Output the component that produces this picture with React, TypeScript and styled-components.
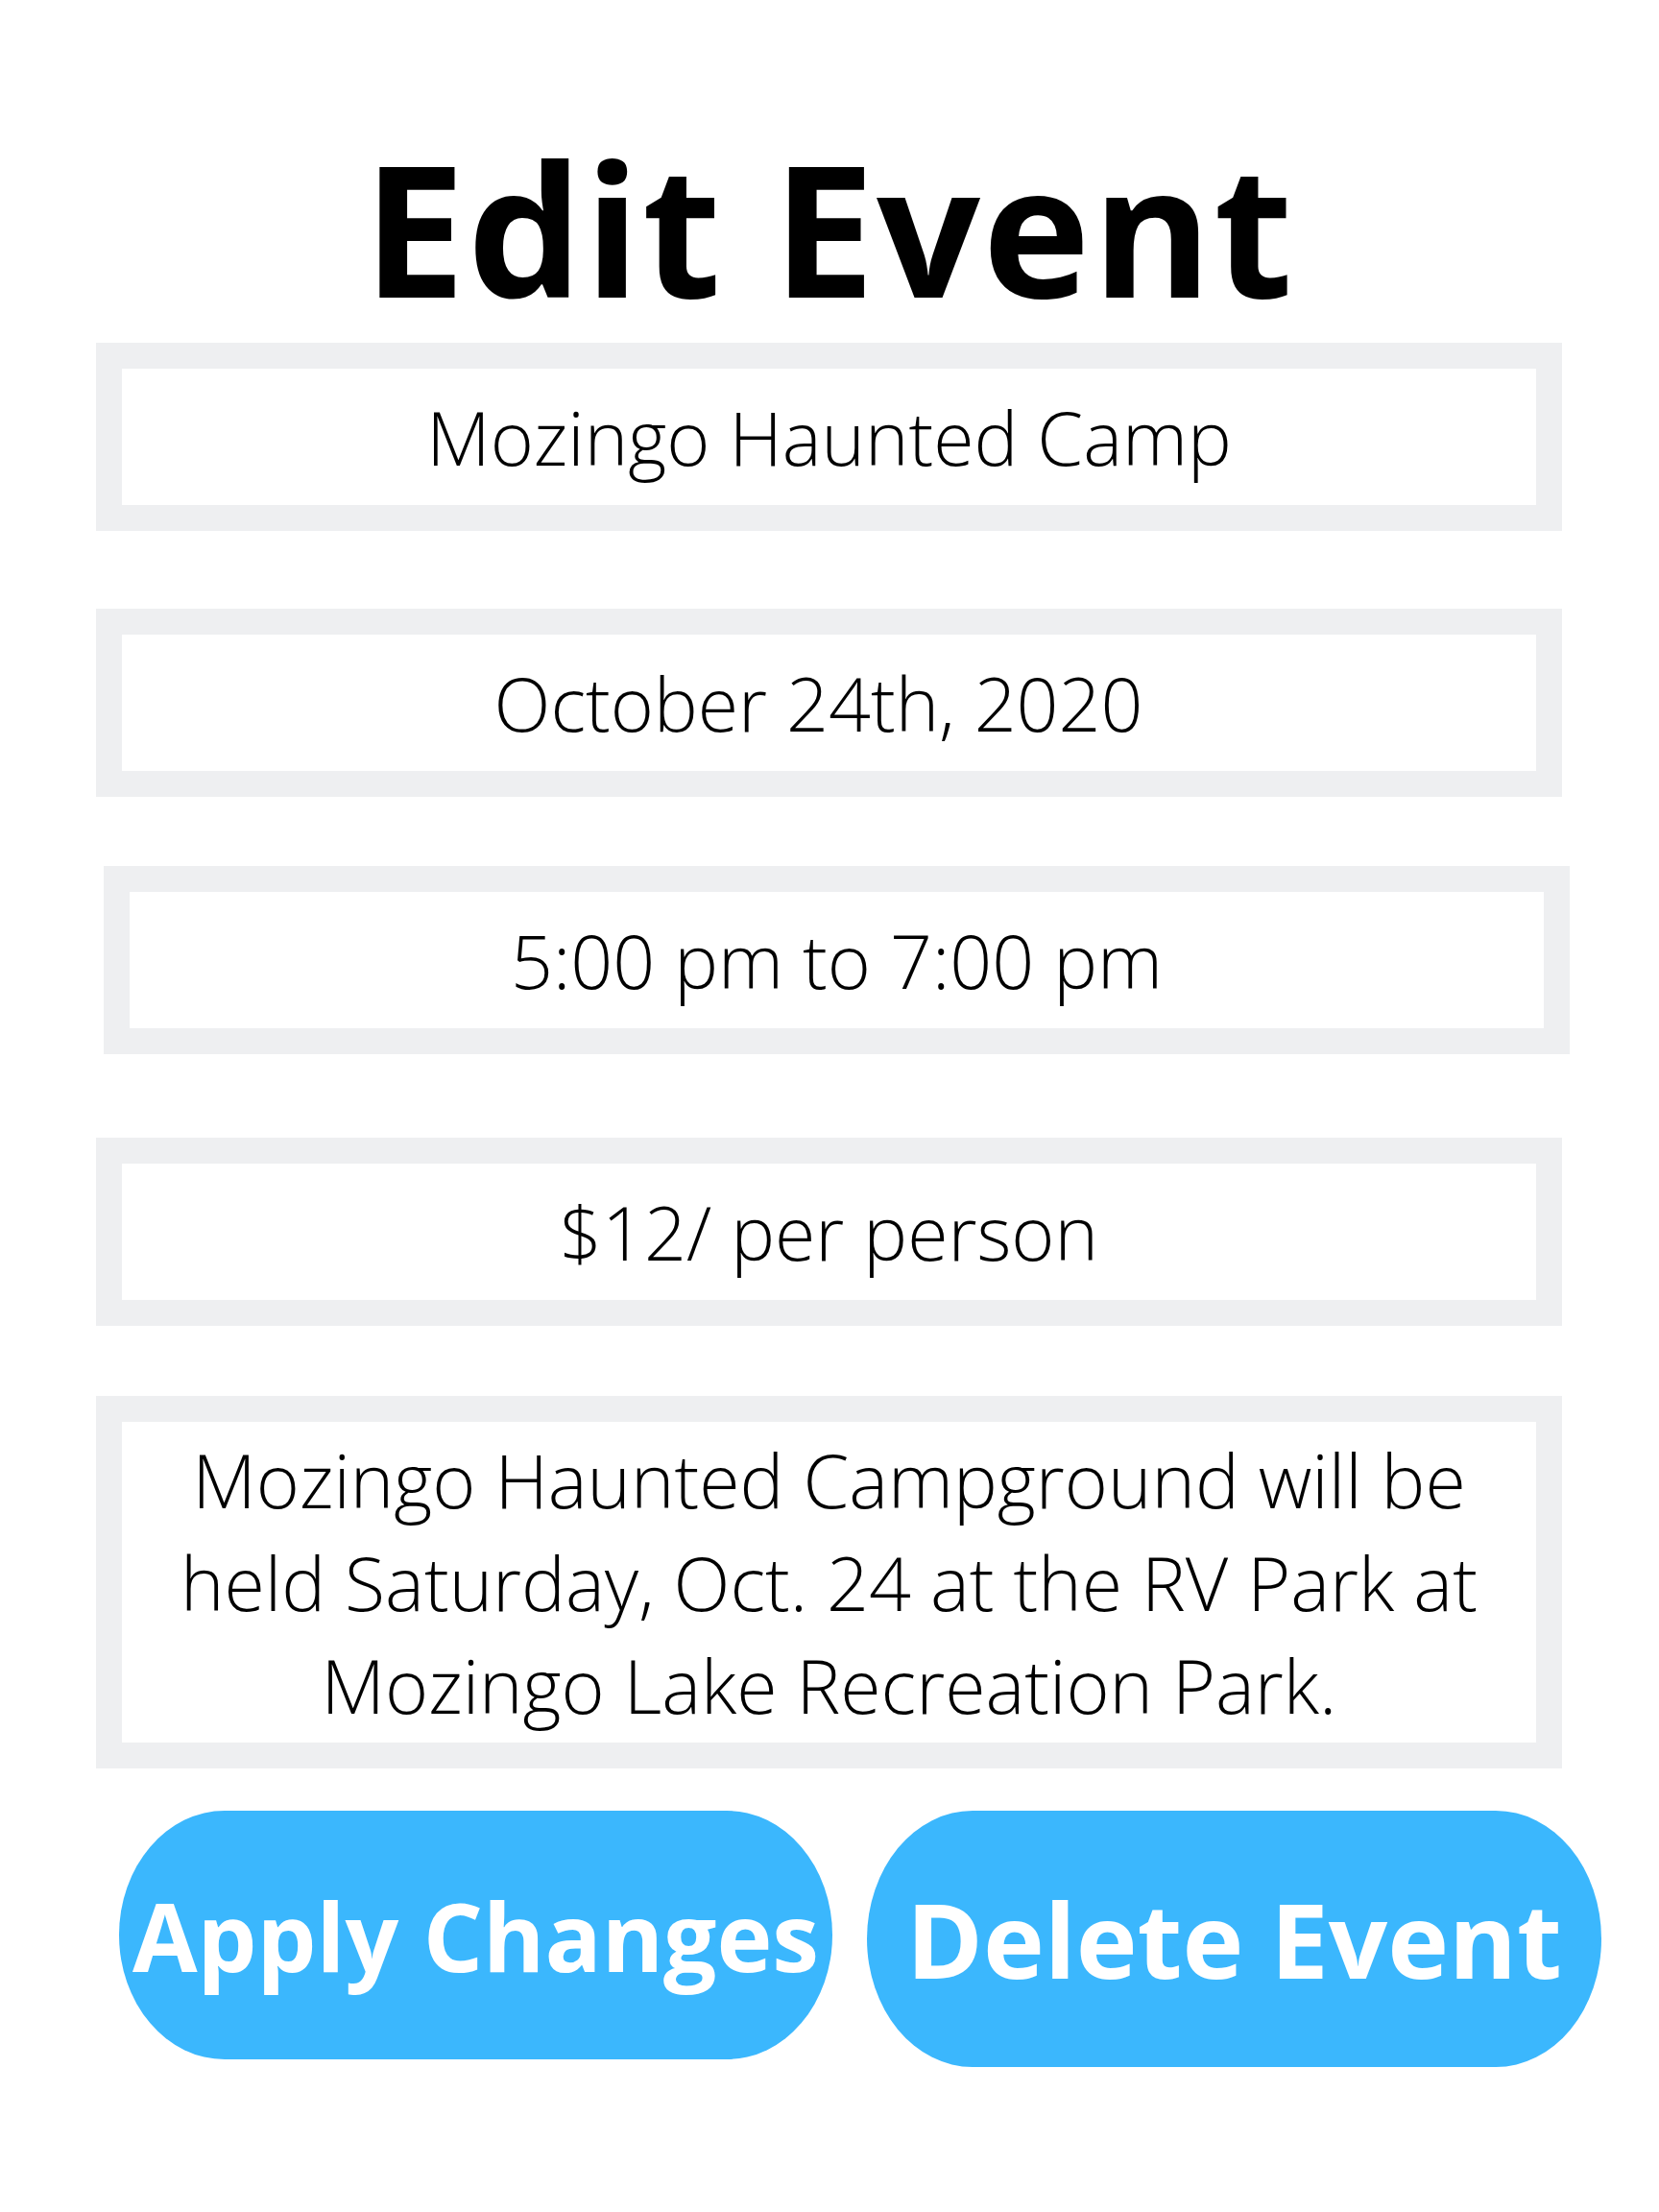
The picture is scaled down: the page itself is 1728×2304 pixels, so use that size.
import React from "react";
import styled, { createGlobalStyle } from "styled-components";

const GlobalStyle = createGlobalStyle`
  html, body {
    margin: 0;
    padding: 0;
    background: #ffffff;
  }
  body {
    font-family: "Open Sans", "Noto Sans", sans-serif;
  }
`;

const Page = styled.main`
  width: 1728px;
  height: 2304px;
  box-sizing: border-box;
  padding: 142px 0 0 100px;
  display: flex;
  flex-direction: column;
  align-items: flex-start;
  background: #ffffff;
`;

const Title = styled.h1`
  margin: 0;
  width: 1527px;
  text-align: center;
  font-family: "Open Sans", sans-serif;
  font-weight: 700;
  font-size: 190px;
  line-height: 190px;
  color: #000000;
  letter-spacing: 2px;
`;

const Field = styled.div<{ $top: number; $shift?: number; $tall?: boolean }>`
  margin-top: ${(p) => p.$top}px;
  margin-left: ${(p) => p.$shift ?? 0}px;
  width: 1527px;
  height: ${(p) => (p.$tall ? 388 : 196)}px;
  box-sizing: border-box;
  border: 27px solid #eeeff1;
  background: #ffffff;
  display: flex;
  align-items: center;
  justify-content: center;
`;

const FieldText = styled.p<{ $offset?: number }>`
  margin: 0 ${(p) => p.$offset ?? 0}px 0 0;
  text-align: center;
  font-family: "Open Sans", sans-serif;
  font-weight: 300;
  font-size: 77px;
  line-height: 107px;
  color: #000000;
  white-space: nowrap;
`;

const ButtonRow = styled.div`
  margin-top: 44px;
  margin-left: 24px;
  display: flex;
  align-items: flex-start;
  gap: 36px;
`;

const PillButton = styled.button<{ $w: number; $h: number; $size: number }>`
  width: ${(p) => p.$w}px;
  height: ${(p) => p.$h}px;
  border: none;
  padding: 0;
  border-radius: 110px / 50%;
  background: #3bb7fd;
  color: #ffffff;
  font-family: "Open Sans", sans-serif;
  font-weight: 700;
  font-size: ${(p) => p.$size}px;
  line-height: 1;
  white-space: nowrap;
  display: flex;
  align-items: center;
  justify-content: center;
  overflow: visible;
  cursor: pointer;
`;

export default function App() {
  return (
    <>
      <GlobalStyle />
      <Page>
        <Title>Edit Event</Title>
        <Field $top={25}>
          <FieldText>Mozingo Haunted Camp</FieldText>
        </Field>
        <Field $top={81}>
          <FieldText $offset={22}>October 24th, 2020</FieldText>
        </Field>
        <Field $top={72} $shift={8}>
          <FieldText>5:00 pm to 7:00 pm</FieldText>
        </Field>
        <Field $top={87}>
          <FieldText>$12/ per person</FieldText>
        </Field>
        <Field $top={73} $tall>
          <FieldText>
            Mozingo Haunted Campground will be
            <br />
            held Saturday, Oct. 24 at the RV Park at
            <br />
            Mozingo Lake Recreation Park.
          </FieldText>
        </Field>
        <ButtonRow>
          <PillButton $w={743} $h={259} $size={98}>
            Apply Changes
          </PillButton>
          <PillButton $w={765} $h={267} $size={108}>
            Delete Event
          </PillButton>
        </ButtonRow>
      </Page>
    </>
  );
}
